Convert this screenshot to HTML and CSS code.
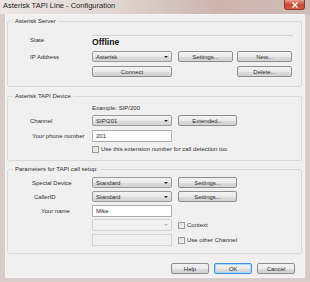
FILE: index.html
```html
<!doctype html>
<html lang="en">
<head>
	<meta charset="UTF-8">
	<title>Asterisk TAPI Line - Configuration</title>
	<link rel="stylesheet" href="styles.css">
</head>
<body>
<div class="window">
	<div class="titlebar">
		<span class="title">Asterisk TAPI Line - Configuration</span>
		<span class="close">
			<svg width="8" height="6" viewBox="0 0 8 6"><path d="M1.5 0.5 L6.5 5.5 M6.5 0.5 L1.5 5.5" stroke="#fff" stroke-width="1.4"/></svg>
		</span>
	</div>
	<div class="client">
		<fieldset class="group g1">
			<legend>Asterisk Server</legend>
			<div class="row state-row">
				<span class="lbl">State</span>
				<span class="state">Offline</span>
			</div>
			<div class="row r-ip">
				<span class="lbl">IP Address</span>
				<div class="combo">Asterisk<i class="arrow"></i></div>
				<a href="javascript:;" class="btn w55">Settings...</a>
				<a href="javascript:;" class="btn w55 btn-far">New...</a>
			</div>
			<div class="row r-connect">
				<span class="lbl"></span>
				<a href="javascript:;" class="btn w80">Connect</a>
				<a href="javascript:;" class="btn w55 btn-end">Delete...</a>
			</div>
		</fieldset>

		<fieldset class="group g2">
			<legend>Asterisk TAPI Device</legend>
			<div class="row r-example">
				<span class="lbl"></span>
				<span class="hint">Example: SIP/200</span>
			</div>
			<div class="row r-channel">
				<span class="lbl">Channel</span>
				<div class="combo">SIP/201<i class="arrow"></i></div>
				<a href="javascript:;" class="btn w59">Extended...</a>
			</div>
			<div class="row r-phone">
				<span class="lbl lbl-in">Your phone number</span>
				<div class="edit">201</div>
			</div>
			<div class="row r-check">
				<span class="lbl"></span>
				<label class="check"><i class="box"></i>Use this extension number for call detection too</label>
			</div>
		</fieldset>

		<fieldset class="group g3">
			<legend>Parameters for TAPI call setup:</legend>
			<div class="row r-special">
				<span class="lbl lbl-in">Special Device</span>
				<div class="combo">Standard<i class="arrow"></i></div>
				<a href="javascript:;" class="btn w59">Settings...</a>
			</div>
			<div class="row r-caller">
				<span class="lbl lbl-caller">CallerID</span>
				<div class="combo">Standard<i class="arrow"></i></div>
				<a href="javascript:;" class="btn w59">Settings...</a>
			</div>
			<div class="row r-name">
				<span class="lbl lbl-name">Your name</span>
				<div class="edit">Mike</div>
			</div>
			<div class="row r-context">
				<span class="lbl"></span>
				<div class="combo off"><i class="arrow"></i></div>
				<label class="check"><i class="box"></i>Context</label>
			</div>
			<div class="row r-other">
				<span class="lbl"></span>
				<div class="edit off"></div>
				<label class="check"><i class="box"></i>Use other Channel</label>
			</div>
		</fieldset>

		<div class="actions">
			<a href="javascript:;" class="btn w38">Help</a>
			<a href="javascript:;" class="btn w38 default">OK</a>
			<a href="javascript:;" class="btn w38">Cancel</a>
		</div>
	</div>
</div>
</body>
</html>
```

FILE: styles.css
```css
*{
	margin: 0;
	padding: 0;
	box-sizing: border-box;
}
body {
	font-family: "Liberation Sans", Arial, sans-serif;
	font-size: 6px;
	color: #2b2b2b;
	background: #d6cdcb;
}
a {
	color: #2b2b2b;
	text-decoration: none;
}

.window {
	width: 310px;
	height: 282px;
	background: #d6cdcb;
	display: flex;
	flex-direction: column;
}
.titlebar {
	height: 14px;
	display: flex;
	align-items: flex-start;
	background: linear-gradient(90deg, #ebe6e4 0%, #e0d7d4 35%, #cdb5ad 70%, #cfbcb6 100%);
}
.title {
	font-size: 7.5px;
	line-height: 11px;
	padding-left: 3px;
	color: #1e1e1e;
	flex: 1;
}
.close {
	width: 21px;
	height: 10px;
	margin-right: 5px;
	display: flex;
	align-items: center;
	justify-content: center;
	border: 1px solid #8a3a30;
	border-top: 0;
	border-radius: 0 0 3px 3px;
	background: linear-gradient(#e8a08f, #c9452f 55%, #d9624a);
}

.client {
	flex: 1;
	margin: 0 5px 4px 5px;
	background: #f0f0f0;
	border: 1px solid #f7f5f5;
	display: flex;
	flex-direction: column;
}

.group {
	margin: 2px 2px 0 1px;
	border: 1px solid #dadada;
	border-radius: 2px;
	padding: 0 0 0 22px;
}
.group legend {
	padding: 0 2px;
	line-height: 8px;
	margin-left: -17px;
}
.g1 { padding-bottom: 9px; }
.g2 { margin-top: 5px; padding-bottom: 7px; }
.g3 { margin-top: 4px; padding-bottom: 7px; }

.row {
	display: flex;
	align-items: center;
	height: 11px;
}
.lbl {
	width: 62px;
	flex-shrink: 0;
}
.lbl-in { padding-left: 2px; }
.lbl-caller { padding-left: 4px; }
.lbl-name { padding-left: 11px; }

.state-row { margin-top: 8px; height: 14px; }
.state {
	width: 201px;
	margin-top: 2px;
	border-top: 1px solid #d2d2d2;
	font-size: 8.6px;
	font-weight: bold;
	line-height: 12px;
	color: #111;
}
.r-ip { margin-top: 4px; }
.r-connect { margin-top: 4px; }

.r-example { margin-top: 4px; height: 9px; }
.r-channel { margin-top: 2px; }
.r-phone { margin-top: 4px; height: 12px; }
.r-check { margin-top: 3px; height: 8px; }

.r-special { margin-top: 4px; }
.r-caller { margin-top: 3px; }
.r-name { margin-top: 3px; height: 12px; }
.r-context { margin-top: 2px; height: 12px; }
.r-other { margin-top: 3px; height: 12px; }

.combo, .edit {
	width: 80px;
	height: 100%;
	flex-shrink: 0;
	display: flex;
	align-items: center;
	padding-left: 3px;
	position: relative;
}
.combo {
	border: 1px solid #9a9a9a;
	border-radius: 2px;
	background: linear-gradient(#f4f4f4, #e8e8e8 50%, #dcdcdc 51%, #d4d4d4);
}
.combo .arrow {
	position: absolute;
	right: 3px;
	top: 50%;
	margin-top: -1px;
	border-left: 2px solid transparent;
	border-right: 2px solid transparent;
	border-top: 2px solid #222;
}
.edit {
	border: 1px solid #acadb0;
	background: #fff;
}
.combo.off, .edit.off {
	border-color: #d3d3d3;
	background: #f1f1f1;
}
.combo.off .arrow { border-top-color: #b8b8b8; }

.btn {
	height: 11px;
	flex-shrink: 0;
	display: flex;
	align-items: center;
	justify-content: center;
	border: 1px solid #8d8d8d;
	border-radius: 2px;
	background: linear-gradient(#f3f3f3, #ebebeb 50%, #dddddd 51%, #d1d1d1);
	margin-left: 6px;
}
.w38 { width: 38px; }
.w55 { width: 55px; }
.w59 { width: 59px; }
.w80 { width: 80px; margin-left: 0; }
.btn-far { margin-left: 4px; }
.btn-end { margin-left: 65px; }

.hint { line-height: 9px; }

.check {
	display: flex;
	align-items: center;
	margin-left: 6px;
	white-space: nowrap;
}
.r-check .check { margin-left: 0; }
.check .box {
	width: 7px;
	height: 7px;
	margin-right: 2px;
	border: 1px solid #9a9a9a;
	background: linear-gradient(135deg, #dcdcdc, #f6f6f6);
}

.actions {
	display: flex;
	justify-content: flex-end;
	margin: 9px 9px 0 0;
}
.actions .btn { margin-left: 5px; }
.actions .default {
	border-color: #3d8ee0;
	box-shadow: inset 0 0 0 1px #a8d8f5;
}
```
